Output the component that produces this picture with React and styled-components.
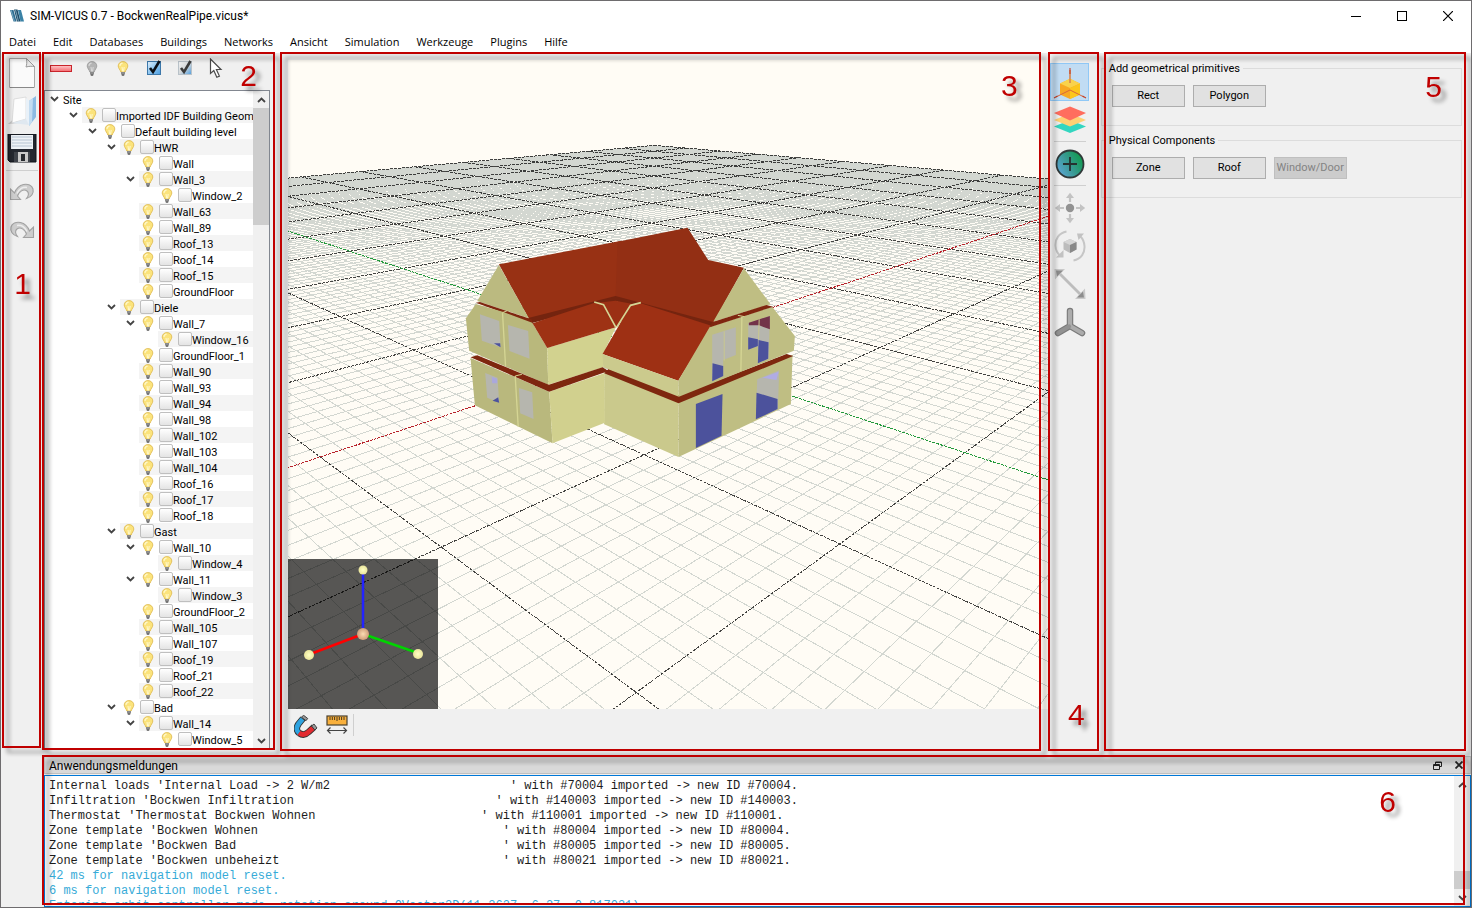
import React from "react";
import styled, { createGlobalStyle } from "styled-components";

const GlobalStyle = createGlobalStyle`
  *, *::before, *::after { box-sizing: border-box; }
  body { margin: 0; background: #f0f0f0; }
  button, input { font: inherit; color: inherit; }
`;

const UI_FONT = 'Roboto, "Noto Sans", sans-serif';
const MENU_FONT = '"Open Sans", "Noto Sans", sans-serif';

/* ---------- window frame ---------- */

const AppWindow = styled.div`
  display: flex;
  flex-direction: column;
  height: 100vh;
  overflow: hidden;
  border: 1px solid #6e6c6e;
  background: #f0f0f0;
  color: #000;
  font: 11px/16px ${UI_FONT};
`;

const TitleBar = styled.header`
  display: flex;
  align-items: center;
  height: 30px;
  flex: none;
  padding-left: 8px;
  background: #fff;
`;

const WindowTitle = styled.h1`
  flex: 1;
  margin: 0 0 0 5px;
  font-size: 12px;
  font-weight: 400;
`;

const WindowButton = styled.button`
  display: grid;
  place-items: center;
  width: 46px;
  height: 30px;
  padding: 0;
  border: 0;
  background: none;
`;

const MenuBar = styled.nav`
  display: flex;
  gap: 17px;
  height: 22px;
  flex: none;
  padding: 3px 8px 0;
  background: #fff;
  font-family: ${MENU_FONT};
`;

const MenuLink = styled.a`
  color: #000;
  text-decoration: none;
`;

const Body = styled.div`
  display: flex;
  flex: 1;
  min-height: 0;
`;

const Workspace = styled.div`
  display: flex;
  flex-direction: column;
  flex: 1;
  min-width: 0;
`;

const Panels = styled.div`
  display: flex;
  flex: 1;
  min-height: 0;
`;

/* ---------- numbered callouts ---------- */

const Callout = styled.div`
  position: absolute;
  z-index: 2;
  top: ${(p) => p.$top ?? -1}px;
  bottom: ${(p) => p.$bottom ?? 4}px;
  left: ${(p) => p.$left}px;
  right: ${(p) => p.$right}px;
  border: 2px solid #c00000;
  filter: drop-shadow(5px 5px 2px rgba(0, 0, 0, 0.4));
  pointer-events: none;
`;

const CalloutNumber = styled.span`
  position: absolute;
  top: ${(p) => p.$y};
  right: ${(p) => p.$x}px;
  color: #c00000;
  font: 30px/30px "Liberation Sans", sans-serif;
`;

/* ---------- tool bars ---------- */

const ToolColumn = styled.div`
  position: relative;
  display: flex;
  flex-direction: column;
  align-items: center;
  flex: none;
  width: ${(p) => p.$width}px;
  padding: ${(p) => p.$top}px ${(p) => p.$right}px 0 0;
`;

const ToolButton = styled.button`
  display: grid;
  place-items: center;
  flex: none;
  width: ${(p) => p.$width ?? 39}px;
  height: ${(p) => p.$height ?? 38}px;
  padding: 0;
  border: 1px solid ${(p) => (p.$active ? "#90c8f6" : "transparent")};
  background: ${(p) => (p.$active ? "#c1dcf3" : "none")};
`;

const ToolRule = styled.hr`
  width: 32px;
  margin: 2px 0 3px;
  border: 0;
  border-top: 1px solid #cfcfcf;
`;

const BarRule = styled.span`
  width: 1px;
  height: 22px;
  background: #cfcfcf;
`;

/* ---------- tree ---------- */

const TreePanel = styled.section`
  position: relative;
  display: flex;
  flex-direction: column;
  flex: none;
  width: 238px;
  padding: 0 11px 5px 1px;
`;

const TreeTools = styled.div`
  display: flex;
  align-items: center;
  flex: none;
  height: 37px;
  padding: 0 0 7px 1px;
`;

const TreeBox = styled.div`
  display: flex;
  flex: 1;
  min-height: 0;
  border: 1px solid #828790;
  background: #fff;
`;

const TreeRows = styled.ul`
  flex: 1;
  min-width: 0;
  margin: 0;
  padding: 0;
  overflow: hidden;
  list-style: none;
`;

const TreeRow = styled.li`
  display: flex;
  height: 16px;
  padding-left: ${(p) => p.$level * 19}px;
`;

const TreeSlot = styled.span`
  display: grid;
  place-items: center;
  flex: none;
  width: 18px;
`;

const TreeItem = styled.label`
  display: flex;
  align-items: center;
  flex: 1;
  min-width: 0;
  overflow: hidden;
  white-space: nowrap;
  background: ${(p) => (p.$shaded ? "#f4f4f4" : "transparent")};
`;

const TreeText = styled.span`
  padding-top: 3px;
`;

const TreeCheck = styled.input`
  appearance: none;
  flex: none;
  width: 14px;
  height: 14px;
  margin: 0 0 0 2px;
  border: 1px solid #bfbfbf;
  border-radius: 2px;
  background: linear-gradient(#fff, #e4e4e4);
`;

const ScrollBar = styled.div`
  display: flex;
  flex-direction: column;
  align-items: center;
  flex: none;
  width: 16px;
  background: #f0f0f0;
`;

const ScrollArrow = styled.button`
  display: grid;
  place-items: center;
  width: 100%;
  height: 17px;
  padding: 0;
  border: 0;
  background: none;
`;

const ScrollTrack = styled.div`
  display: flex;
  flex-direction: column;
  justify-content: ${(p) => (p.$end ? "flex-end" : "flex-start")};
  flex: 1;
  width: 100%;
`;

const ScrollThumb = styled.div`
  height: ${(p) => p.$size}px;
  background: #cdcdcd;
`;

/* ---------- 3D view ---------- */

const ViewPanel = styled.section`
  position: relative;
  display: flex;
  flex-direction: column;
  flex: 1;
  min-width: 0;
  padding: 7px 0 0 7px;
`;

const Scene = styled.svg`
  display: block;
  flex: 1;
  min-height: 0;
  width: 100%;
`;

const SceneBox = styled.div`
  position: relative;
  display: flex;
  flex: 1;
  min-height: 0;
  background: #fffcf5;
`;

const AxisInset = styled.svg`
  position: absolute;
  left: 0;
  bottom: 0;
  width: 150px;
  height: 150px;
`;

const ViewTools = styled.div`
  display: flex;
  align-items: flex-start;
  flex: none;
  height: 46px;
  padding: 5px 0 0 2px;
`;

/* ---------- geometry panel ---------- */

const SidePanel = styled.section`
  position: relative;
  display: flex;
  flex-direction: column;
  gap: 6px;
  flex: none;
  width: 26%;
  padding: 7px 9px 0 1px;
`;

const Group = styled.fieldset`
  display: flex;
  gap: 8px;
  min-width: 0;
  height: 66px;
  margin: 0;
  padding: 9px 10px 0;
  border: 1px solid #dcdcdc;
`;

const GroupTitle = styled.legend`
  height: 16px;
  margin-left: -6px;
  padding: 1px 3px 0;
`;

const PushButton = styled.button`
  width: 73px;
  height: 22px;
  padding: 0;
  border: 1px solid #adadad;
  background: #e1e1e1;
  &:disabled {
    border-color: #bfbfbf;
    background: #cccccc;
    color: #838383;
  }
`;

/* ---------- message dock ---------- */

const Dock = styled.section`
  position: relative;
  flex: none;
  height: 152px;
  padding: 1px 0 0 1px;
`;

const DockBar = styled.div`
  display: flex;
  align-items: center;
  gap: 6px;
  height: 18px;
  padding: 0 4px;
  border: 1px solid #c0c0c0;
  background: #d9d9d9;
`;

const DockTitle = styled.h2`
  flex: 1;
  margin: 0;
  padding-top: 2px;
  font-size: 12px;
  font-weight: 400;
`;

const DockButton = styled.button`
  display: grid;
  place-items: center;
  width: 15px;
  height: 15px;
  padding: 0;
  border: 0;
  background: none;
`;

const LogBox = styled.div`
  display: flex;
  height: 132px;
  margin-top: 1px;
  border: 1px solid #0078d7;
  background: #fff;
`;

const LogText = styled.pre`
  flex: 1;
  min-width: 0;
  height: 128px;
  margin: 0;
  padding: 3px 4px 0;
  overflow: hidden;
  color: #1c1c1c;
  font: 12px/15px "Liberation Mono", monospace;
`;

const LogLine = styled.div`
  color: ${(p) => (p.$info ? "#37abd8" : "inherit")};
`;

/* ---------- icons ---------- */

const Chevron = ({ up }) => (
  <svg width="9" height="6" viewBox="0 0 9 6">
    <path d={up ? "M1 5 4.5 1.5 8 5" : "M1 1 4.5 4.5 8 1"} fill="none" stroke="#444" strokeWidth="1.8" />
  </svg>
);

const Bulb = ({ size = 15, off }) => {
  const c = off ? ["#b4b4b4", "#979797", "#d8d8d8"] : ["#fbe37c", "#ddb649", "#fff7c8"];
  return (
    <svg width="12" height={size} viewBox="0 0 12 15">
      <path d="M6 .6C3.2.6 1.2 2.5 1.2 5c0 2.3 2 3.5 2.6 6h4.4c.6-2.5 2.6-3.7 2.6-6C10.8 2.5 8.8.6 6 .6Z" fill={c[0]} stroke={c[1]} strokeWidth=".8" />
      <path d="M3 5c0-1.7 1.2-2.8 2.6-2.9M5 6l.7 4.5M7.2 6l-.7 4.5" fill="none" stroke={c[2]} strokeWidth="1.1" />
      <rect x="4" y="11" width="4" height="2.5" fill="#8b8b8b" />
      <rect x="4.6" y="13.2" width="2.8" height="1.5" rx=".7" fill="#555" />
    </svg>
  );
};

const LogoIcon = () => (
  <svg width="16" height="16" viewBox="0 0 16 16">
    <path d="M1 2h3.500l3 11.500H4.500Z" fill="#2f6d91" />
    <path d="M5 1.500h3.500L11.500 13.500H8Z" fill="#1f4c69" />
    <path d="M9 2h3l3 11.500h-3.500Z" fill="#3b82a6" />
    <path d="m2 2 3.500 11.500M6.500 2l3 11.500" stroke="#9cc6da" strokeWidth=".7" />
  </svg>
);

const MinusIcon = () => (
  <svg width="22" height="7" viewBox="0 0 22 7">
    <defs>
      <linearGradient id="minusFill" x1="0" y1="0" x2="0" y2="1">
        <stop offset="0" stopColor="#ffc9cb" />
        <stop offset="1" stopColor="#f5696e" />
      </linearGradient>
    </defs>
    <rect x=".5" y=".5" width="21" height="6" fill="url(#minusFill)" stroke="#c9242b" />
  </svg>
);

const TickIcon = ({ half }) => (
  <svg width="16" height="16" viewBox="0 0 16 16">
    <defs>
      <linearGradient id={half ? "tickHalf" : "tickFull"} x1="0" y1="0" x2="1" y2="1">
        <stop offset="0" stopColor={half ? "#f3f3f3" : "#e4f2fd"} />
        <stop offset=".5" stopColor={half ? "#d5d8da" : "#8fc6f0"} />
        <stop offset="1" stopColor="#4b9de0" />
      </linearGradient>
    </defs>
    <rect x="1.5" y="1.5" width="13" height="13" fill={`url(#${half ? "tickHalf" : "tickFull"})`} stroke={half ? "#b9c2c9" : "#3d78aa"} />
    <path d="m4 8 3 4 6.500-11" fill="none" stroke={half ? "#3b3b3b" : "#0c1118"} strokeWidth="2.6" />
  </svg>
);

const CursorIcon = () => (
  <svg width="14" height="21" viewBox="0 0 14 21">
    <path d="M1.500 1v14.500l3.300-3 3 6.800 2.600-1.200-3-6.600h4.600Z" fill="#fff" stroke="#4a4a4a" strokeWidth="1.2" />
  </svg>
);

const NewIcon = () => (
  <svg width="28" height="32" viewBox="0 0 28 32">
    <path d="M1.500 1.500h17l8 8v21h-25Z" fill="#fafafa" stroke="#aaa" />
    <path d="M18.500 1.500c.5 4 .3 6-.5 8.500 3-.8 5.500-.8 8.500-.5Z" fill="#e6e6e6" stroke="#999" />
    <path d="M2 30.500h24" stroke="#888" />
  </svg>
);

const FolderIcon = () => (
  <svg width="30" height="32" viewBox="0 0 30 32">
    <path d="M1 29 12 19v9Z" fill="#b5b5b5" opacity=".7" />
    <path d="M7 4 19 2v22L5 28Z" fill="#fdfdfd" stroke="#d2d2d2" strokeWidth=".7" />
    <path d="m19 3 3 3v24l-3-2Z" fill="#e9f1f8" />
    <path d="M5 28 19 24l3 6Z" fill="#dfe8f0" />
    <path d="m22 6 7-5v21l-7 9Z" fill="#8dbbe3" />
    <path d="m22 6 4-3-1 24-3 4Z" fill="#c3dcf1" />
  </svg>
);

const SaveIcon = () => (
  <svg width="30" height="30" viewBox="0 0 30 30">
    <path d="M1 0h28v28H3l-2-2Z" fill="#23272f" stroke="#11141a" />
    <rect x="4" y="1" width="22" height="14" fill="#eef2f6" />
    <path d="M5 3h20M5 6h20M5 9h20M5 12h20" stroke="#b7c4d2" />
    <path d="M7 18h16v10H7Z" fill="#3e4249" />
    <path d="M11 18h10v10H11Z" fill="#c9c9c9" />
    <rect x="14" y="20" width="4" height="7" fill="#26292e" />
  </svg>
);

const UndoIcon = ({ flip }) => (
  <svg width="26" height="20" viewBox="0 0 26 20">
    <g transform={flip ? "translate(26 0) scale(-1 1)" : undefined}>
      <path d="M1.500 6v10.500h10l-3-3.500C10 8.500 14.500 5.500 18 8c2 1.500 2 4.500-.5 7.500 5-1.500 7.500-5.500 6.500-9.500-1-3.500-5-5.500-9.500-4.500C10 2.500 7 6 5.500 10Z" fill="#cdcdcd" stroke="#a1a1a1" strokeWidth="1.1" />
      <path d="M8 10.500c1.500-4 5.500-7 10-6" fill="none" stroke="#ededed" strokeWidth="1.6" />
    </g>
  </svg>
);

const PrimitiveIcon = () => (
  <svg width="34" height="34" viewBox="0 0 34 34">
    <path d="m17 14 10 4.500v11L17 34 7 29.500v-11Z" fill="#f7a823" />
    <path d="m17 13.500 10 5L17 23 7 18.500Z" fill="#f9d24b" />
    <path d="m27 18.500-10 4.500v11l10-4.500Z" fill="#fcc61c" />
    <path d="M17 5v13" stroke="#d9844c" strokeWidth="1.6" />
    <path d="M17 25 3 32M17 25l14 7" stroke="#d9663c" strokeWidth="1" />
    <path d="M17 3v6M4.500 31 1 33M29.500 31l3.500 2" stroke="#c0402a" strokeWidth="1.1" />
  </svg>
);

const LayersIcon = () => (
  <svg width="34" height="28" viewBox="0 0 34 28">
    <path d="m17 14 16 6.500-16 6.500-16-6.500Z" fill="#33d6c0" />
    <path d="m17 7.500 16 6.500-16 6.500L1 14Z" fill="#ffd074" />
    <path d="M17 .5 33 7l-16 7.500L1 7Z" fill="#ff6d5e" />
  </svg>
);

const PlusIcon = () => (
  <svg width="30" height="30" viewBox="0 0 30 30">
    <defs>
      <linearGradient id="plusFill" x1="0" y1=".8" x2="1" y2=".2">
        <stop offset="0" stopColor="#5fa6da" />
        <stop offset=".5" stopColor="#36998e" />
        <stop offset="1" stopColor="#0a9b45" />
      </linearGradient>
    </defs>
    <circle cx="15" cy="15" r="13.5" fill="url(#plusFill)" stroke="#2f3838" strokeWidth="1.8" />
    <path d="M15 8v14M8 15h14" stroke="#263030" strokeWidth="1.8" />
  </svg>
);

const MoveIcon = () => (
  <svg width="32" height="32" viewBox="0 0 32 32">
    <circle cx="16" cy="16" r="4.2" fill="#929292" />
    <path d="M16 10V5M16 22v5M10 16H5M22 16h5" stroke="#c3c3c3" strokeWidth="2.2" />
    <path d="m16 .8 4 5.200h-8ZM16 31.200l4-5.200h-8ZM.8 16 6 12v8ZM31.200 16 26 12v8Z" fill="#c3c3c3" />
  </svg>
);

const RotateIcon = () => (
  <svg width="32" height="32" viewBox="0 0 32 32">
    <path d="M12.500 1.500C5 3 1 9 1.500 16c.3 4 2 7.500 5 10M19.500 30.500C27 29 31 23 30.500 16c-.3-4-2-7.500-4-9.500" fill="none" stroke="#c6c6c6" strokeWidth="2" />
    <path d="M2 27.500h7.500V20ZM23 3.500h7L24.500 10Z" fill="#c2c2c2" />
    <path d="m16 9 6.500 3v7.500L16 23l-6.500-3.500V12Z" fill="#bcbcbc" />
    <path d="m16 9 6.500 3L16 15 9.500 12Z" fill="#d6d6d6" />
    <path d="M22.500 12 16 15v8l6.500-3.500Z" fill="#898989" />
  </svg>
);

const ScaleIcon = () => (
  <svg width="32" height="32" viewBox="0 0 32 32">
    <path d="m5 5 22 22" stroke="#bdbdbd" strokeWidth="2.8" />
    <path d="M.5 1H11L1 11.500ZM31.500 31H21L31 20.500Z" fill="#c9c9c9" />
    <path d="M2 2.500h7L3 8.500ZM30 29.500h-7l6-6Z" fill="#8c8c8c" />
  </svg>
);

const AxesIcon = () => (
  <svg width="32" height="30" viewBox="0 0 32 30">
    <path d="M16 4v15L4 26M16 19l12 7" fill="none" stroke="#7b7b7b" strokeWidth="6.5" strokeLinecap="round" strokeLinejoin="round" />
    <path d="M16 4v15l12 7" fill="none" stroke="#acacac" strokeWidth="4.2" strokeLinecap="round" strokeLinejoin="round" />
    <path d="M15 19.500 4 26" fill="none" stroke="#929292" strokeWidth="4.2" strokeLinecap="round" />
  </svg>
);

const MagnetIcon = () => (
  <svg width="24" height="24" viewBox="0 0 24 24">
    <path d="M9 3.500 4.500 9c-2.500 3.500-2 7 .5 9" fill="none" stroke="#333" strokeWidth="6.5" />
    <path d="M5 18c3.500 2.500 7 1.500 9.500-1L20 12" fill="none" stroke="#333" strokeWidth="6.5" />
    <path d="M8.500 4 4.500 9c-2.500 3.500-2 7 .5 9" fill="none" stroke="#2ea3e0" strokeWidth="4.8" />
    <path d="M5 18c3.500 2.500 7 1.500 9.500-1L19 13" fill="none" stroke="#e22b30" strokeWidth="4.800" />
    <path d="m7.500 2.200 2-2 4.200 3.300-1.700 2.200ZM17.500 11l2.500-2 3 4-2.200 2Z" fill="#999" stroke="#333" strokeWidth=".9" />
  </svg>
);

const RulerIcon = () => (
  <svg width="22" height="20" viewBox="0 0 22 20">
    <rect x="1" y="1" width="20" height="9" fill="#f9b03c" stroke="#4a4130" strokeWidth="1.2" />
    <path d="M4 2v3M6.300 2v3M8.600 2v3M11 2v4M13.300 2v3M15.600 2v3M18 2v3" stroke="#4a3a1c" />
    <path d="M1.500 15.500h19M4.500 12.500l-3 3 3 3M17.500 12.500l3 3-3 3" fill="none" stroke="#444" strokeWidth="1.2" />
  </svg>
);

/* ---------- scene drawing ---------- */

/* Perspective projection of the ground plane; one unit is one major cell. */
const project = (u, v) => {
  const w = 1 + 0.14016 * u - 0.13677 * v;
  return [
    (208.58 * u + 26.7 * v + 647.7) / w,
    (9.96 * u - 9.97 * v + 348.8) / w,
  ].map((n) => n.toFixed(1));
};

const EXTENT = 10;
const NEAR = 0.2;

const lineU = (u) => {
  const end = Math.min(EXTENT, (1 - NEAR + 0.14016 * u) / 0.13677);
  return end > -EXTENT ? `M${project(u, -EXTENT)}L${project(u, end)}` : "";
};

const lineV = (v) => {
  const start = Math.max(-EXTENT, (NEAR - 1 + 0.13677 * v) / 0.14016);
  return start < EXTENT ? `M${project(start, v)}L${project(EXTENT, v)}` : "";
};

const steps = Array.from({ length: 201 }, (_, i) => i - 100);
const minorPath = steps
  .filter((i) => i % 10)
  .map((i) => lineU(i / 10) + lineV(i / 10))
  .join("");
const majorPath = steps
  .filter((i) => i % 10 === 0 && i !== 0)
  .map((i) => lineU(i / 10) + lineV(i / 10))
  .join("");

const HOUSE = [
  ["117,163 485,92 485,268 208,328", "#983114"],
  ["473,95 683,53 745,150 852,173 760,340 467,262", "#932f14"],
  ["205,324 467,258 762,337 762,352 467,274 214,340", "#74240f"],
  ["117,165 52,273 207,325", "#bbba80"],
  ["48,278 60,276 215,328 220,342", "#7f270f"],
  ["48,282 128,305 217,338 262,414 265,524 140,471 28,422 18,325", "#b9b87c"],
  ["262,414 468,352 430,432 430,472 265,524", "#d2d28f"],
  ["218,340 405,278 430,285 468,352 262,414", "#9e3214"],
  ["405,279 467,272 530,284 468,352", "#9b3014"],
  ["512,286 543,280 757,348 655,512 428,432", "#9e3014"],
  ["433,486 656,572 656,741 433,643", "#cac98c"],
  ["656,572 998,434 993,582 656,741", "#bfbe83"],
  ["433,490 446,476 657,556 980,432 1000,438 656,580", "#7e270f"],
  ["428,432 655,512 657,560 430,472", "#cbca8d"],
  ["750,350 845,320 937,290 1005,378 1002,422 657,560 655,512", "#bfbe83"],
  ["852,175 932,283 760,335", "#bfbe83"],
  ["756,337 920,285 940,290 750,352", "#7f260f"],
  ["32,444 268,545 278,700 45,586", "#b9b87d"],
  ["268,545 433,490 435,638 278,700", "#d1d08e"],
  ["32,442 52,436 267,524 428,472 446,483 268,545", "#7e270f"],
  ["60,313 118,333 122,412 66,392", "#b6b6ae"],
  ["102,400 121,400 122,412", "#4c529c"],
  ["144,345 205,363 209,446 149,423", "#b6b6ae"],
  ["76,489 113,503 118,578 82,563", "#b6b6ae"],
  ["96,500 112,506 112,520 97,520", "#aaa8dc"],
  ["98,572 115,562 118,578", "#4c529c"],
  ["177,534 217,547 221,627 181,610", "#b6b6ae"],
  ["757,374 828,352 828,435 790,450 790,498 757,514", "#b6b6ae"],
  ["758,460 790,468 790,498 757,514", "#4c529c"],
  ["865,340 930,318 926,446 894,460 894,408 865,418", "#b6b6ae"],
  ["867,338 930,318 930,358 898,346 867,346", "#723349"],
  ["865,382 894,388 894,408 865,419", "#4c529c"],
  ["896,390 926,397 925,446 894,460", "#4c529c"],
  ["708,582 788,552 785,677 708,714", "#4c529c"],
  ["892,508 958,481 954,597 888,628", "#b6b6ae"],
  ["908,503 956,485 950,510", "#b0ace4"],
  ["890,548 953,567 953,597 888,628", "#4c529c"],
];

const GroundView = () => (
  <Scene viewBox="288 60 760 649" preserveAspectRatio="xMidYMid slice" role="img" aria-label="Building model">
    <path d={minorPath} fill="none" stroke="#d3d7d1" shapeRendering="crispEdges" />
    <path d={majorPath} fill="none" stroke="#151515" strokeOpacity=".8" strokeDasharray="3 1" shapeRendering="crispEdges" />
    <path d={lineV(0)} stroke="#b8232c" strokeDasharray="3 1" shapeRendering="crispEdges" />
    <path d={lineU(0)} stroke="#239a3c" strokeDasharray="3 1" shapeRendering="crispEdges" />
    <g transform="translate(460 210) scale(0.33333)">
      {HOUSE.map(([points, fill]) => (
        <polygon key={points} points={points} fill={fill} />
      ))}
      <g fill="none" stroke="#d5d594" strokeWidth="5">
        <path d="m403 276 28 8 37 68M543 278l-31 8-42 66" />
        <path d="m128 308 9 160M166 498l9 152M846 320l-3 163" strokeWidth="4" />
        <path d="m128 308 14-6M166 498l20-5M834 316l20 4" strokeWidth="3" />
      </g>
      <path d="M793 364v88M898 328l-2 60" stroke="#c9c88e" strokeWidth="3" />
    </g>
  </Scene>
);

const AxisView = () => (
  <AxisInset viewBox="0 0 150 150" aria-hidden="true">
    <defs>
      <radialGradient id="hub">
        <stop offset="0" stopColor="#fbdcb2" />
        <stop offset="1" stopColor="#cf9d78" />
      </radialGradient>
      <radialGradient id="knob">
        <stop offset="0" stopColor="#ffffc4" />
        <stop offset="1" stopColor="#e9e49b" />
      </radialGradient>
    </defs>
    <rect width="150" height="150" fill="#000" opacity=".66" />
    <g fill="none" strokeWidth="2.5">
      <path d="M75 75V15" stroke="#2323ff" />
      <path d="M75 75 25 94" stroke="#f00" />
      <path d="m75 75 52 18" stroke="#00d400" />
    </g>
    <circle cx="75" cy="75" r="6" fill="url(#hub)" />
    <circle cx="75" cy="11" r="4.5" fill="url(#knob)" />
    <circle cx="21" cy="96" r="5" fill="url(#knob)" />
    <circle cx="130" cy="95" r="5" fill="url(#knob)" />
  </AxisInset>
);

/* ---------- content ---------- */

const MENUS = ["Datei", "Edit", "Databases", "Buildings", "Networks", "Ansicht", "Simulation", "Werkzeuge", "Plugins", "Hilfe"];

/* [level, label, expanded] */
const TREE = [
  [0, "Site", true],
  [1, "Imported IDF Building Geom", true],
  [2, "Default building level", true],
  [3, "HWR", true],
  [4, "Wall"],
  [4, "Wall_3", true],
  [5, "Window_2"],
  [4, "Wall_63"],
  [4, "Wall_89"],
  [4, "Roof_13"],
  [4, "Roof_14"],
  [4, "Roof_15"],
  [4, "GroundFloor"],
  [3, "Diele", true],
  [4, "Wall_7", true],
  [5, "Window_16"],
  [4, "GroundFloor_1"],
  [4, "Wall_90"],
  [4, "Wall_93"],
  [4, "Wall_94"],
  [4, "Wall_98"],
  [4, "Wall_102"],
  [4, "Wall_103"],
  [4, "Wall_104"],
  [4, "Roof_16"],
  [4, "Roof_17"],
  [4, "Roof_18"],
  [3, "Gast", true],
  [4, "Wall_10", true],
  [5, "Window_4"],
  [4, "Wall_11", true],
  [5, "Window_3"],
  [4, "GroundFloor_2"],
  [4, "Wall_105"],
  [4, "Wall_107"],
  [4, "Roof_19"],
  [4, "Roof_21"],
  [4, "Roof_22"],
  [3, "Bad", true],
  [4, "Wall_14", true],
  [5, "Window_5"],
];

/* [first part, column of the second part, imported id] */
const IMPORTS = [
  ["Internal loads 'Internal Load -> 2 W/m2", 64, "70004"],
  ["Infiltration 'Bockwen Infiltration", 62, "140003"],
  ["Thermostat 'Thermostat Bockwen Wohnen", 60, "110001"],
  ["Zone template 'Bockwen Wohnen", 63, "80004"],
  ["Zone template 'Bockwen Bad", 63, "80005"],
  ["Zone template 'Bockwen unbeheizt", 63, "80021"],
];

const INFOS = [
  "42 ms for navigation model reset.",
  "6 ms for navigation model reset.",
  "Entering orbit controller mode, rotation around QVector3D(11.2627, 6.27, 0.817031)",
];

const TREE_TOOLS = [
  ["Remove", <MinusIcon />],
  ["Hide", <Bulb off size={17} />],
  ["Show", <Bulb size={17} />],
  ["Select all", <TickIcon />],
  ["Deselect", <TickIcon half />],
  ["Pick", <CursorIcon />],
];

export default function App() {
  return (
    <>
      <GlobalStyle />
      <AppWindow>
        <TitleBar>
          <LogoIcon />
          <WindowTitle>SIM-VICUS 0.7 - BockwenRealPipe.vicus*</WindowTitle>
          <WindowButton aria-label="Minimize">
            <svg width="10" height="10"><path d="M0 5.500h10" stroke="#000" /></svg>
          </WindowButton>
          <WindowButton aria-label="Maximize">
            <svg width="10" height="10"><rect x=".5" y=".5" width="9" height="9" fill="none" stroke="#000" /></svg>
          </WindowButton>
          <WindowButton aria-label="Close">
            <svg width="10" height="10"><path d="m0 0 10 10M10 0 0 10" stroke="#000" strokeWidth="1.2" /></svg>
          </WindowButton>
        </TitleBar>
        <MenuBar>
          {MENUS.map((m) => (
            <MenuLink key={m} href="#">{m}</MenuLink>
          ))}
        </MenuBar>
        <Body>
          <ToolColumn $width={42} $top={1} $right={0}>
            <ToolButton aria-label="New"><NewIcon /></ToolButton>
            <ToolButton aria-label="Open"><FolderIcon /></ToolButton>
            <ToolButton aria-label="Save"><SaveIcon /></ToolButton>
            <ToolRule />
            <ToolButton aria-label="Undo"><UndoIcon /></ToolButton>
            <ToolButton aria-label="Redo"><UndoIcon flip /></ToolButton>
            <Callout $left={1} $right={2} $bottom={159}>
              <CalloutNumber $x={8} $y="31%">1</CalloutNumber>
            </Callout>
          </ToolColumn>
          <Workspace>
            <Panels>
              <TreePanel>
                <TreeTools>
                  {TREE_TOOLS.map(([label, icon]) => (
                    <ToolButton key={label} aria-label={label} $width={31} $height={30}>{icon}</ToolButton>
                  ))}
                </TreeTools>
                <TreeBox>
                  <TreeRows>
                    {TREE.map(([level, label, open], i) => (
                      <TreeRow key={label} $level={level}>
                        <TreeSlot>{open && <Chevron />}</TreeSlot>
                        <TreeItem $shaded={i % 2 === 1}>
                          {level > 0 && (
                            <>
                              <TreeSlot><Bulb /></TreeSlot>
                              <TreeCheck type="checkbox" />
                            </>
                          )}
                          <TreeText>{label}</TreeText>
                        </TreeItem>
                      </TreeRow>
                    ))}
                  </TreeRows>
                  <ScrollBar>
                    <ScrollArrow aria-label="Scroll up"><Chevron up /></ScrollArrow>
                    <ScrollTrack><ScrollThumb $size={117} /></ScrollTrack>
                    <ScrollArrow aria-label="Scroll down"><Chevron /></ScrollArrow>
                  </ScrollBar>
                </TreeBox>
                <Callout $left={-1} $right={6} $bottom={5}>
                  <CalloutNumber $x={16} $y="7px">2</CalloutNumber>
                </Callout>
              </TreePanel>
              <ViewPanel>
                <SceneBox>
                  <GroundView />
                  <AxisView />
                </SceneBox>
                <ViewTools>
                  <ToolButton aria-label="Snap" $width={31} $height={22}><MagnetIcon /></ToolButton>
                  <ToolButton aria-label="Measure" $width={32} $height={22}><RulerIcon /></ToolButton>
                  <BarRule />
                </ViewTools>
                <Callout $left={-1} $right={7}>
                  <CalloutNumber $x={21} $y="17px">3</CalloutNumber>
                </Callout>
              </ViewPanel>
              <ToolColumn $width={52} $top={10} $right={8}>
                <ToolButton aria-label="Add geometry" $active><PrimitiveIcon /></ToolButton>
                <ToolButton aria-label="Layers"><LayersIcon /></ToolButton>
                <ToolRule />
                <ToolButton aria-label="Add"><PlusIcon /></ToolButton>
                <ToolRule />
                <ToolButton aria-label="Move"><MoveIcon /></ToolButton>
                <ToolButton aria-label="Rotate"><RotateIcon /></ToolButton>
                <ToolButton aria-label="Scale"><ScaleIcon /></ToolButton>
                <ToolButton aria-label="Align"><AxesIcon /></ToolButton>
                <Callout $left={0} $right={1}>
                  <CalloutNumber $x={12} $y="93%">4</CalloutNumber>
                </Callout>
              </ToolColumn>
              <SidePanel>
                <Group>
                  <GroupTitle>Add geometrical primitives</GroupTitle>
                  <PushButton>Rect</PushButton>
                  <PushButton>Polygon</PushButton>
                </Group>
                <Group>
                  <GroupTitle>Physical Components</GroupTitle>
                  <PushButton>Zone</PushButton>
                  <PushButton>Roof</PushButton>
                  <PushButton disabled>Window/Door</PushButton>
                </Group>
                <Callout $left={4} $right={5}>
                  <CalloutNumber $x={22} $y="18px">5</CalloutNumber>
                </Callout>
              </SidePanel>
            </Panels>
            <Dock>
              <DockBar>
                <DockTitle>Anwendungsmeldungen</DockTitle>
                <DockButton aria-label="Float">
                  <svg width="9" height="9"><path d="M2.500 3V1h6v4.500h-2M.5 3.500h6v5h-6ZM.5 4.500h6M2.500 1.500h6" fill="none" stroke="#222" /></svg>
                </DockButton>
                <DockButton aria-label="Close">
                  <svg width="8" height="8"><path d="m.5.5 7 7M7.500.5l-7 7" stroke="#222" strokeWidth="1.8" /></svg>
                </DockButton>
              </DockBar>
              <LogBox>
                <LogText>
                  {IMPORTS.map(([text, column, id]) => (
                    <LogLine key={text}>
                      {`${text.padEnd(column)}' with #${id} imported -> new ID #${id}.`}
                    </LogLine>
                  ))}
                  {INFOS.map((text) => (
                    <LogLine key={text} $info>{text}</LogLine>
                  ))}
                </LogText>
                <ScrollBar>
                  <ScrollArrow aria-label="Scroll up"><Chevron up /></ScrollArrow>
                  <ScrollTrack $end><ScrollThumb $size={18} /></ScrollTrack>
                  <ScrollArrow aria-label="Scroll down"><Chevron /></ScrollArrow>
                </ScrollBar>
              </LogBox>
              <Callout $left={-1} $right={6} $top={0} $bottom={2}>
                <CalloutNumber $x={67} $y="30px">6</CalloutNumber>
              </Callout>
            </Dock>
          </Workspace>
        </Body>
      </AppWindow>
    </>
  );
}
